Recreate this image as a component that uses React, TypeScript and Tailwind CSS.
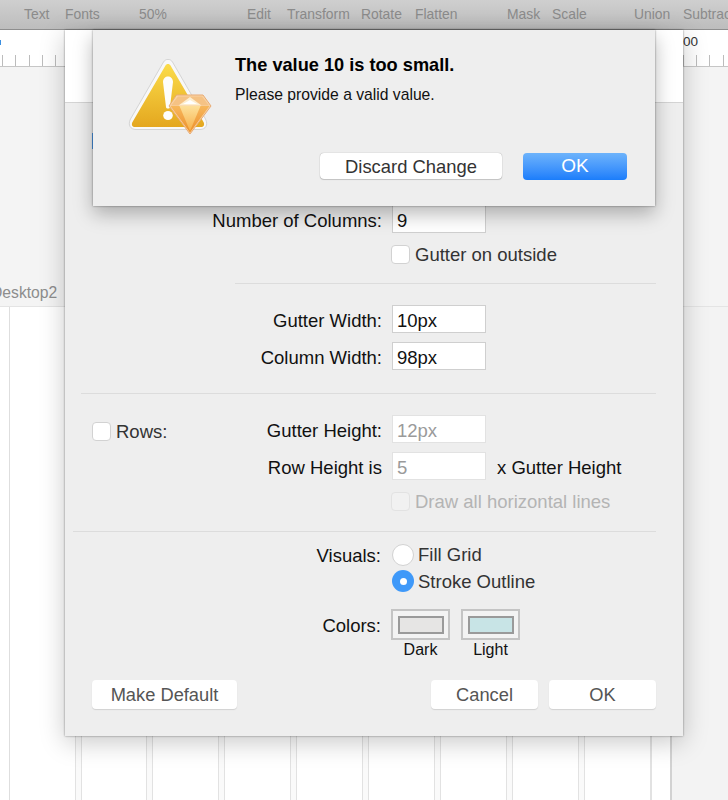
import React from "react";

const sans = "font-['Liberation_Sans',Arial,sans-serif]";

function Label({ w, children }: { w: string; children: React.ReactNode }) {
  return <div className={`${w} shrink-0 whitespace-nowrap pt-[3px] text-right`}>{children}</div>;
}

function Field({ value, disabled }: { value: string; disabled?: boolean }) {
  return (
    <div
      className={`flex h-[28px] w-[94px] items-center border bg-white pl-[4px] pt-[3px] text-[18.5px] ${
        disabled ? "border-[#e2e2e2] text-[#9a9a9a]" : "border-[#cfcfcf] text-[#111]"
      }`}
    >
      {value}
    </div>
  );
}

function Check({ disabled }: { disabled?: boolean }) {
  return (
    <div
      className={`size-[19px] shrink-0 rounded-[4px] border ${
        disabled ? "border-[#e2e2e2] bg-[#f1f1f1]" : "border-[#d2d2d2] bg-white"
      }`}
    />
  );
}

function Button({ children, className = "" }: { children: React.ReactNode; className?: string }) {
  return (
    <div
      className={`flex h-[29px] items-center justify-center rounded-[4px] bg-white pt-[1px] text-[18.3px] text-[#555] shadow-[0_1px_1px_rgba(0,0,0,0.12)] ${className}`}
    >
      {children}
    </div>
  );
}

function Swatch({ fill, label }: { fill: string; label: string }) {
  return (
    <div className="flex w-[59px] flex-col items-center">
      <div className="flex h-[31px] w-[59px] items-center justify-center border-2 border-[#c4c4c4] bg-[#f3f3f3]">
        <div className={`h-[18px] w-[46px] border-2 border-[#9a9a9a] ${fill}`} />
      </div>
      <div className="text-[16px] leading-[20px] text-[#111]">{label}</div>
    </div>
  );
}

function AlertIcon() {
  return (
    <svg width="84" height="78" viewBox="0 0 84 78" className="block">
      <defs>
        <linearGradient id="tri" x1="0" y1="0" x2="0" y2="1">
          <stop offset="0" stopColor="#fbdc4a" />
          <stop offset="1" stopColor="#e4a71f" />
        </linearGradient>
        <linearGradient id="low" x1="0" y1="0" x2="0" y2="1">
          <stop offset="0" stopColor="#f7b75c" />
          <stop offset="1" stopColor="#ec8f2c" />
        </linearGradient>
        <linearGradient id="mid" x1="0" y1="0" x2="0" y2="1">
          <stop offset="0" stopColor="#fde09a" />
          <stop offset="1" stopColor="#f6b04a" />
        </linearGradient>
      </defs>
      <path
        d="M35.5 3 C37.5 -0.5 42.5 -0.5 44.5 3 L77.5 60 C80.5 66 77.5 70.5 72 70.5 L8 70.5 C2.5 70.5 -0.5 66 2.5 60 Z"
        fill="#f8f8f8"
        stroke="#d4d4d4"
        strokeWidth="1"
      />
      <path
        d="M37.5 6.5 C38.5 4.5 41.5 4.5 42.5 6.5 L75.5 63 C77 66 75.5 68 73 68 L7 68 C4.5 68 3 66 4.5 63 Z"
        fill="url(#tri)"
      />
      <path d="M35 23 C35 15.5 45 15.5 45 23 L42 48 C42 50 38 50 38 48 Z" fill="#fdfdfb" />
      <ellipse cx="40" cy="56.5" rx="4.8" ry="4.6" fill="#fdfdfb" />
      <path d="M48.5 36 L75 36 L83 47 L62 75 L41 47 Z" fill="#f8d3a4" stroke="#e9ab74" strokeWidth="1" />
      <path d="M42.5 47 L81.5 47 L62 73.5 Z" fill="url(#low)" />
      <path d="M51.5 47 L72.5 47 L62 72 Z" fill="url(#mid)" />
      <path d="M50 37.5 L74 37.5 L81 46.5 L43 46.5 Z" fill="#f5c284" />
      <path d="M50.5 46.5 L62 38 L73.5 46.5 Z" fill="#fdeed0" />
      <path d="M55 45 L62 41 L69 45 Z" fill="#ffffff" />
    </svg>
  );
}

const columnGaps = [75, 146, 218, 290, 362, 434, 506, 578];
const toolbarItems: [string, number][] = [
  ["Text", 24],
  ["Fonts", 65],
  ["50%", 139],
  ["Edit", 247],
  ["Transform", 287],
  ["Rotate", 361],
  ["Flatten", 415],
  ["Mask", 507],
  ["Scale", 552],
  ["Union", 634],
  ["Subtract", 683],
];

export default function App() {
  return (
    <div className={`relative h-[800px] w-[728px] overflow-hidden bg-[#f3f3f3] text-[#111] ${sans}`}>
      {/* Toolbar */}
      <div className="h-[30px] border-b border-[#8e8e8e] bg-gradient-to-b from-[#cfcfcf] to-[#bdbdbd] text-[13.9px] leading-[16px] text-[#8b8b8b]">
        <div className="relative h-[16px] w-full translate-y-[6px]">
          {toolbarItems.map(([t, x]) => (
            <span key={t} className="absolute top-0 whitespace-nowrap" style={{ left: x }}>
              {t}
            </span>
          ))}
        </div>
      </div>

      {/* Ruler */}
      <div className="relative h-[37px] border-b border-[#c6c6c6] bg-white">
        <div className="absolute left-0 top-[10px] h-[5px] w-px bg-[#3b8fe0]" />
        <div className="absolute left-[683px] top-[5px] text-[13.5px] leading-[14px] text-[#333]">00</div>
        <div className="absolute bottom-0 left-0 flex h-[11px] w-full">
          {Array.from({ length: 55 }).map((_, i) => (
            <div
              key={i}
              className="h-full w-px shrink-0 bg-[#bcbcbc]"
              style={{ marginLeft: i === 0 ? 2 : 12.35 }}
            />
          ))}
        </div>
      </div>

      {/* Canvas above the artboard */}
      <div className="relative h-[239px] bg-[#f4f4f4]">
        <div className="absolute left-[-9px] top-[218px] text-[15.7px] leading-[16px] text-[#8d8d8d]">Desktop2</div>
      </div>

      {/* Artboard */}
      <div className="relative h-[494px] border-t border-[#e4e4e4] bg-[#f3f3f3]">
        <div className="absolute bottom-0 left-0 top-0 w-[672px] border-r-2 border-[#d2d2d2] bg-white" />
        <div className="absolute bottom-0 left-[9px] top-0 w-px bg-[#dedede]" />
        {columnGaps.map((x) => (
          <div
            key={x}
            className="absolute bottom-0 top-0 w-[7px] border-x border-[#e2e2e2] bg-[#fafafa]"
            style={{ left: x }}
          />
        ))}
        <div className="absolute bottom-0 left-[650px] top-0 w-[2px] bg-[#e2e2e2]" />
      </div>

      {/* Grid settings sheet */}
      <div className="absolute left-[65px] top-[30px] flex h-[706px] w-[618px] flex-col bg-[#eeeeee] text-[18.5px] leading-[20px] shadow-[0_0_2px_rgba(0,0,0,0.45),0_6px_24px_rgba(0,0,0,0.22)]">
        <div className="h-[73px] shrink-0 border-b border-[#d4d4d4] bg-white" />
        <div className="relative flex-1">
          <div className="absolute left-[27px] top-[30px] h-[16px] w-[3px] bg-[#4a97ea]" />

          <div className="absolute left-0 right-0 top-[102px] flex items-center">
            <Label w="w-[317px]">Number of Columns:</Label>
            <div className="ml-[10px]">
              <Field value="9" />
            </div>
          </div>
          <div className="absolute left-[326px] top-[141px] flex items-center gap-[5px] text-[#333]">
            <Check />
            <span className="pt-[1px]">Gutter on outside</span>
          </div>
          <div className="absolute left-[170px] right-[27px] top-[180px] h-px bg-[#dcdcdc]" />

          <div className="absolute left-0 right-0 top-[202px] flex flex-col gap-[9px]">
            <div className="flex items-center">
              <Label w="w-[317px]">Gutter Width:</Label>
              <div className="ml-[10px]">
                <Field value="10px" />
              </div>
            </div>
            <div className="flex items-center">
              <Label w="w-[317px]">Column Width:</Label>
              <div className="ml-[10px]">
                <Field value="98px" />
              </div>
            </div>
          </div>
          <div className="absolute left-[16px] right-[27px] top-[290px] h-px bg-[#dcdcdc]" />

          <div className="absolute left-[27px] top-[318px] flex items-center gap-[5px]">
            <Check />
            <span className="pt-[1px] text-[#333]">Rows:</span>
          </div>
          <div className="absolute left-0 right-0 top-[312px] flex flex-col gap-[9px]">
            <div className="flex items-center">
              <Label w="w-[317px]">Gutter Height:</Label>
              <div className="ml-[10px]">
                <Field value="12px" disabled />
              </div>
            </div>
            <div className="flex items-center">
              <Label w="w-[317px]">Row Height is</Label>
              <div className="ml-[10px]">
                <Field value="5" disabled />
              </div>
              <span className="ml-[11px] whitespace-nowrap pt-[3px]">x Gutter Height</span>
            </div>
          </div>
          <div className="absolute left-[326px] top-[388px] flex items-center gap-[5px] text-[#b4b4b4]">
            <Check disabled />
            <span className="pt-[1px]">Draw all horizontal lines</span>
          </div>
          <div className="absolute left-[8px] right-[27px] top-[428px] h-px bg-[#dcdcdc]" />

          <div className="absolute left-0 top-[440px] flex items-center">
            <Label w="w-[316px]">Visuals:</Label>
            <div className="ml-[11px] flex items-center gap-[4px] text-[#333]">
              <div className="size-[22px] rounded-full border border-[#d2d2d2] bg-white" />
              <span className="pt-[1px]">Fill Grid</span>
            </div>
          </div>
          <div className="absolute left-[327px] top-[467px] flex items-center gap-[4px] text-[#333]">
            <div className="flex size-[22px] items-center justify-center rounded-full bg-[#3f99f9]">
              <div className="size-[7px] rounded-full bg-white" />
            </div>
            <span className="pt-[1px]">Stroke Outline</span>
          </div>

          <div className="absolute left-0 top-[506px] flex items-start">
            <Label w="w-[316px]">
              <div className="mt-[4px]">Colors:</div>
            </Label>
            <div className="ml-[10px] flex gap-[11px]">
              <Swatch fill="bg-[#e6e5e4]" label="Dark" />
              <Swatch fill="bg-[#c8e4e6]" label="Light" />
            </div>
          </div>

          <div className="absolute bottom-[27px] left-[27px] right-[27px] flex items-center">
            <Button className="w-[145px]">Make Default</Button>
            <div className="flex-1" />
            <Button className="w-[107px]">Cancel</Button>
            <Button className="ml-[11px] w-[107px]">OK</Button>
          </div>
        </div>
      </div>

      {/* Alert sheet */}
      <div className="absolute left-[93px] top-[30px] h-[176px] w-[562px] bg-[#eeeeee] shadow-[0_0_2px_rgba(0,0,0,0.45),0_8px_18px_rgba(0,0,0,0.28)]">
        <div className="absolute left-[35px] top-[29px]">
          <AlertIcon />
        </div>
        <div className="absolute left-[142px] top-[25px] whitespace-nowrap text-[18.2px] font-bold leading-[20px] text-black">
          The value 10 is too small.
        </div>
        <div className="absolute left-[142px] top-[55px] whitespace-nowrap text-[15.7px] leading-[20px] text-[#111]">
          Please provide a valid value.
        </div>
        <div className="absolute left-[227px] top-[123px] flex h-[26px] w-[182px] items-center justify-center rounded-[4px] bg-white pt-[1px] text-[18.4px] text-[#333] shadow-[0_0_1px_rgba(0,0,0,0.4),0_1px_1px_rgba(0,0,0,0.15)]">
          Discard Change
        </div>
        <div className="absolute left-[430px] top-[123px] flex h-[27px] w-[104px] items-center justify-center rounded-[4px] bg-gradient-to-b from-[#6db3fb] to-[#1a7dfb] text-[19px] text-white">
          OK
        </div>
      </div>
    </div>
  );
}
